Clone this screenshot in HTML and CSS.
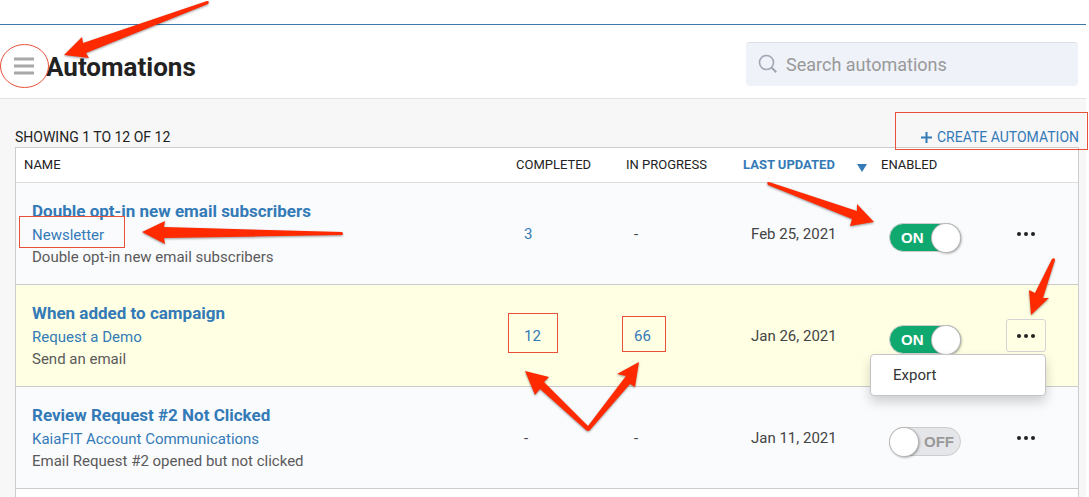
FILE: index.html
```html
<!DOCTYPE html>
<html lang="en">
<head>
    <meta charset="UTF-8">
    <meta name="viewport" content="width=device-width, initial-scale=1.0">
    <title>Automations</title>
    <link rel="stylesheet" href="styles.css">
</head>
<body>
    <header class="page-header">
        <button class="menu-button" type="button" aria-label="Open menu">
            <svg width="20" height="18" viewBox="0 0 20 18" aria-hidden="true">
                <path d="M1 2h18M1 9h18M1 16h18" stroke="#a8a8a8" stroke-width="3" stroke-linecap="square"/>
            </svg>
        </button>
        <h1>Automations</h1>
        <label class="search">
            <svg width="20" height="20" viewBox="0 0 20 20" fill="none" stroke="#a0a6b4" aria-hidden="true">
                <circle cx="8.5" cy="8.5" r="7" stroke-width="1.6"/>
                <path d="M13.5 13.5l4.8 4.8" stroke-width="2"/>
            </svg>
            <input type="search" placeholder="Search automations" aria-label="Search automations">
        </label>
    </header>

    <main class="content">
        <div class="toolbar">
            <span>SHOWING 1 TO 12 OF 12</span>
            <a href="#" class="create-link">
                <svg width="11" height="11" viewBox="0 0 11 11" aria-hidden="true">
                    <path d="M5.5 0v11M0 5.5h11" stroke="currentColor" stroke-width="2"/>
                </svg>
                CREATE AUTOMATION
            </a>
        </div>

        <div class="table-card">
            <table>
                <colgroup>
                    <col>
                    <col class="col-completed">
                    <col class="col-progress">
                    <col class="col-updated">
                    <col class="col-enabled">
                    <col class="col-actions">
                </colgroup>
                <thead>
                    <tr>
                        <th>NAME</th>
                        <th>COMPLETED</th>
                        <th>IN PROGRESS</th>
                        <th aria-sort="descending">
                            <a href="#" class="sort-link">LAST UPDATED <span class="sort-arrow"></span></a>
                        </th>
                        <th>ENABLED</th>
                        <th></th>
                    </tr>
                </thead>
                <tbody>
                    <tr>
                        <td>
                            <a href="#" class="name">Double opt-in new email subscribers</a>
                            <a href="#" class="campaign">Newsletter</a>
                            <p class="description">Double opt-in new email subscribers</p>
                        </td>
                        <td><a href="#">3</a></td>
                        <td>-</td>
                        <td>Feb 25, 2021</td>
                        <td>
                            <label class="toggle">
                                <input type="checkbox" checked>
                                <span class="track">ON</span>
                            </label>
                        </td>
                        <td>
                            <div class="actions">
                                <button class="more" type="button" aria-label="More actions"><i></i><i></i><i></i></button>
                            </div>
                        </td>
                    </tr>
                    <tr class="highlighted">
                        <td>
                            <a href="#" class="name">When added to campaign</a>
                            <a href="#" class="campaign">Request a Demo</a>
                            <p class="description">Send an email</p>
                        </td>
                        <td><a href="#">12</a></td>
                        <td><a href="#">66</a></td>
                        <td>Jan 26, 2021</td>
                        <td>
                            <label class="toggle">
                                <input type="checkbox" checked>
                                <span class="track">ON</span>
                            </label>
                        </td>
                        <td>
                            <div class="actions">
                                <button class="more open" type="button" aria-label="More actions" aria-expanded="true"><i></i><i></i><i></i></button>
                                <div class="dropdown">
                                    <button type="button">Export</button>
                                </div>
                            </div>
                        </td>
                    </tr>
                    <tr>
                        <td>
                            <a href="#" class="name">Review Request #2 Not Clicked</a>
                            <a href="#" class="campaign">KaiaFIT Account Communications</a>
                            <p class="description">Email Request #2 opened but not clicked</p>
                        </td>
                        <td>-</td>
                        <td>-</td>
                        <td>Jan 11, 2021</td>
                        <td>
                            <label class="toggle">
                                <input type="checkbox">
                                <span class="track">OFF</span>
                            </label>
                        </td>
                        <td>
                            <div class="actions">
                                <button class="more" type="button" aria-label="More actions"><i></i><i></i><i></i></button>
                            </div>
                        </td>
                    </tr>
                </tbody>
            </table>
        </div>
    </main>

    <!-- Callouts drawn over the page -->
    <svg class="callouts" width="1089" height="497" viewBox="0 0 1089 497" aria-hidden="true">
        <g class="outlines">
            <ellipse cx="24.5" cy="66" rx="24" ry="21.5"/>
            <rect x="19.5" y="216.5" width="105" height="31"/>
            <rect x="895.5" y="112.5" width="192" height="37"/>
            <rect x="508.5" y="313.5" width="49" height="39"/>
            <rect x="622.5" y="316.5" width="43" height="35"/>
        </g>
        <g class="arrows">
            <path d="M64 55L82 37L83 43L207 1Q210 1 208 4L86 53L89 58Z"/>
            <path d="M142 232L165 221L164 227L342 232Q344 234 342 235L164 238L165 244Z"/>
            <path d="M874 222L857 204L857 211L769 182Q766 182 768 185L852 219L850 226Z"/>
            <path d="M1031 315L1029 290L1035 293L1052 259Q1055 257 1055 260L1043 298L1049 298Z"/>
            <path d="M525 371L549 377L544 382L588 426L626 376L617 374L639 362L635 387L630 384L590 430Q588 432 586 430L540 389L535 395Z"/>
        </g>
    </svg>
</body>
</html>
```

FILE: styles.css
```css
:root {
    --link-color: #337ab7;
    --text-color: #222;
    --text-secondary: #5a5a5a;
    --border-color: #ccc;
    --toggle-on: #0fa86f;
    --callout-color: #ff2a00;
}

* {
    margin: 0;
    padding: 0;
    box-sizing: border-box;
}

body {
    display: flex;
    flex-direction: column;
    min-height: 100vh;
    padding: 24px 3px 0 0;
    font-family: Roboto, "Liberation Sans", sans-serif;
    font-size: 15px;
    color: var(--text-color);
    background: #fff;
}

a {
    color: var(--link-color);
    text-decoration: none;
}

button,
input {
    font: inherit;
    color: inherit;
    background: none;
    border: 0;
}

.page-header {
    display: flex;
    align-items: center;
    height: 75px;
    padding: 4px 8px 0 14px;
    border-top: 1px solid #3a78ad;
    border-bottom: 1px solid #e2e2e2;
}

.menu-button {
    display: flex;
    margin: 4px 12px 0 0;
}

h1 {
    flex: 1;
    padding-top: 6px;
    font-size: 26px;
    font-weight: 700;
    line-height: 32px;
}

.search {
    display: flex;
    align-items: center;
    gap: 8px;
    width: 332px;
    height: 44px;
    padding: 0 12px;
    background: #eff2f8;
    border-top: 1px solid #dcdfe6;
    border-radius: 4px;
}

.search input {
    flex: 1;
    min-width: 0;
    font-size: 18px;
    outline: 0;
}

.search input::placeholder {
    color: #999;
}

.content {
    flex: 1;
    display: flex;
    flex-direction: column;
    padding: 28px 7px 0 15px;
    background: #f7f7f7;
}

.toolbar {
    display: flex;
    justify-content: space-between;
    font-size: 14px;
    line-height: 20px;
}

.create-link {
    display: flex;
    align-items: center;
    gap: 5px;
}

.table-card {
    flex: 1;
    background: #fff;
    border: 1px solid var(--border-color);
    border-bottom: 0;
}

table {
    width: 100%;
    table-layout: fixed;
    border-spacing: 0;
}

.col-completed {
    width: 110px;
}

.col-progress,
.col-enabled {
    width: 117px;
}

.col-updated {
    width: 138px;
}

.col-actions {
    width: 88px;
}

th {
    height: 35px;
    padding: 0 0 2px 8px;
    font-size: 13px;
    font-weight: 400;
    text-align: left;
    border-bottom: 1px solid #ddd;
}

.sort-link {
    display: flex;
    align-items: center;
    justify-content: space-between;
    padding-right: 6px;
    font-weight: 700;
}

.sort-arrow {
    margin-top: 8px;
    border: 5px solid transparent;
    border-top: 8px solid var(--link-color);
    border-bottom: 0;
}

td {
    padding: 16px;
    line-height: 22px;
    color: #444;
    background: #fafbfd;
    border-bottom: 1px solid var(--border-color);
}

.highlighted td {
    background: #ffffe3;
}

.name {
    display: block;
    font-size: 17px;
    font-weight: 700;
    line-height: 25px;
}

.campaign {
    display: block;
}

.description {
    color: var(--text-secondary);
}

.toggle {
    display: flex;
    width: 72px;
    margin-top: 8px;
}

.toggle input {
    width: 0;
    opacity: 0;
}

.track {
    display: flex;
    flex: 1;
    align-items: center;
    justify-content: space-between;
    flex-direction: row-reverse;
    height: 29px;
    padding-right: 6px;
    font-family: "Liberation Sans", Arial, sans-serif;
    font-size: 15px;
    font-weight: 700;
    color: #999;
    background: #e4e6e9;
    border: 1px solid #ccc;
    border-radius: 15px;
}

.track::after {
    content: "";
    width: 28px;
    height: 28px;
    background: #fff;
    border-radius: 50%;
    box-shadow: 0 0 0 1px #bbb, 1px 1px 3px rgba(0, 0, 0, 0.5);
}

.toggle input:checked + .track {
    flex-direction: row;
    padding: 0 0 0 11px;
    color: #fff;
    background: var(--toggle-on);
}

.actions {
    position: relative;
    width: 40px;
}

.more {
    display: flex;
    align-items: center;
    justify-content: center;
    gap: 3px;
    width: 40px;
    height: 33px;
    border: 1px solid transparent;
    border-radius: 3px;
}

.more i {
    width: 4px;
    height: 4px;
    background: #222;
    border-radius: 50%;
}

.more.open {
    border-color: #d5d5d5;
}

.dropdown {
    position: absolute;
    top: 35px;
    right: 0;
    width: 176px;
    padding: 8px 0;
    background: #fff;
    border: 1px solid #c4c4c4;
    border-radius: 4px;
    box-shadow: 0 6px 12px rgba(0, 0, 0, 0.18);
}

.dropdown button {
    width: 100%;
    padding: 0 22px;
    line-height: 24px;
    color: #333;
    text-align: left;
}

.callouts {
    position: absolute;
    top: 0;
    left: 0;
    pointer-events: none;
}

.outlines {
    fill: none;
    stroke: #e8503a;
}

.arrows {
    fill: var(--callout-color);
    filter: drop-shadow(0 1px 1px rgba(0, 0, 0, 0.4));
}
```
